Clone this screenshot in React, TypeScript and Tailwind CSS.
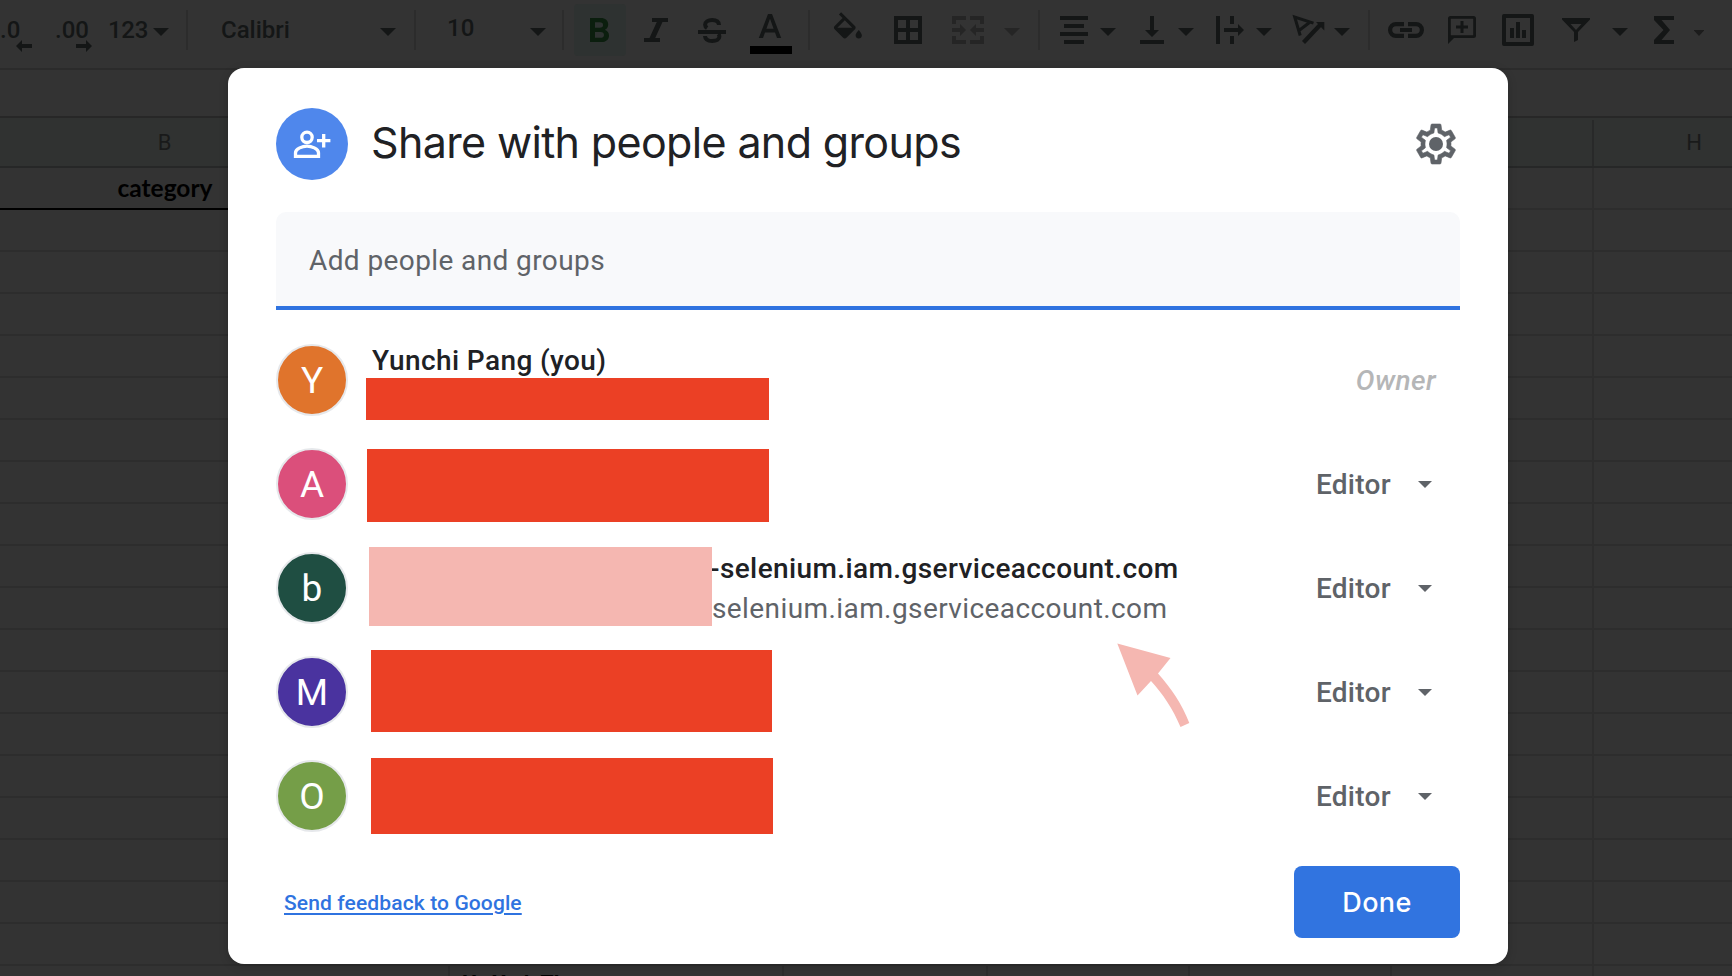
import React from "react";

type Person = {
  initial: string;
  avatar: string;
  role: "Owner" | "Editor";
  mask: string;
  name?: string;
  nameClass?: string;
  email?: string;
};

const people: Person[] = [
  {
    initial: "Y",
    avatar: "bg-[#e0742c]",
    role: "Owner",
    name: "Yunchi Pang (you)",
    nameClass: "tracking-[0.4px]",
    mask: "left-[90px] top-[50px] h-[42px] w-[403px] bg-[#eb4025]",
  },
  {
    initial: "A",
    avatar: "bg-[#db4f7b]",
    role: "Editor",
    mask: "left-[91px] top-[17px] h-[73px] w-[402px] bg-[#eb4025]",
  },
  {
    initial: "b",
    avatar: "bg-[#1f4e42]",
    role: "Editor",
    name: "-selenium.iam.gserviceaccount.com",
    nameClass: "pl-[338px] tracking-[0.4px]",
    email: "selenium.iam.gserviceaccount.com",
    mask: "left-[93px] top-[11px] h-[79px] w-[343px] bg-[#f5b7b1]",
  },
  {
    initial: "M",
    avatar: "bg-[#4a339f]",
    role: "Editor",
    mask: "left-[95px] top-[10px] h-[82px] w-[401px] bg-[#eb4025]",
  },
  {
    initial: "O",
    avatar: "bg-[#759e48]",
    role: "Editor",
    mask: "left-[95px] top-[14px] h-[76px] w-[402px] bg-[#eb4025]",
  },
];

function Glyph({
  x,
  w,
  className = "",
  children,
}: {
  x: number;
  w: number;
  className?: string;
  children: React.ReactNode;
}) {
  return (
    <svg
      width={w}
      height={56}
      viewBox={`${x} 0 ${w} 56`}
      fill="currentColor"
      className={`shrink-0 ${className}`}
    >
      {children}
    </svg>
  );
}

function Caret({ className }: { className: string }) {
  return (
    <svg width="16" height="56" viewBox="0 0 16 56" fill="currentColor" className={`shrink-0 ${className}`}>
      <path d="M0 28H16L8 36Z" />
    </svg>
  );
}

function Divider({ className }: { className: string }) {
  return <div className={`mt-[10px] h-[40px] w-[2px] shrink-0 bg-[#2c2c2c] ${className}`} />;
}

function Toolbar() {
  return (
    <div className="flex h-[70px] w-full items-start overflow-hidden border-b-2 border-[#2b2b2b] text-[24px] font-medium text-[#141616]">
      <div className="flex w-[32px] shrink-0">
        <span className="mt-[16px] w-[20px] leading-[28px]">.0</span>
        <svg width="16" height="56" viewBox="16 0 16 56" fill="currentColor" className="-ml-[4px] shrink-0">
          <path d="M16 46l6-6v4h10v4H22v4z" />
        </svg>
      </div>
      <span className="ml-[23px] mt-[16px] w-[33px] shrink-0 leading-[28px]">.00</span>
      <Glyph x={76} w={16} className="-ml-[12px]">
        <path d="M92 46l-6-6v4H76v4h10v4z" />
      </Glyph>
      <span className="ml-[16px] mt-[16px] w-[42px] shrink-0 leading-[28px] tracking-[-0.3px]">123</span>
      <Caret className="ml-[3px]" />
      <Divider className="ml-[17px]" />
      <span className="ml-[33px] mt-[16px] w-[80px] shrink-0 leading-[28px]">Calibri</span>
      <Caret className="ml-[79px]" />
      <Divider className="ml-[18px]" />
      <span className="ml-[31px] mt-[14px] w-[40px] shrink-0 leading-[28px]">10</span>
      <Caret className="ml-[43px]" />
      <Divider className="ml-[16px]" />
      <div className="ml-[10px] mt-[4px] h-[52px] w-[52px] shrink-0 rounded-[4px] bg-[#2e3231] text-[#0b1e0e]">
        <svg width="52" height="52" viewBox="574 4 52 52" fill="currentColor">
          <path
            fillRule="evenodd"
            d="M590 18h10.500c5 0 7.700 2.500 7.700 6.400 0 2.500-1.300 4.400-3.400 5.400 2.600.9 4.200 3 4.200 5.600 0 4.200-3 6.600-7.700 6.600H590zM595 22.200v5.600h4.700c2.200 0 3.400-1 3.400-2.800s-1.200-2.800-3.400-2.800zM595 32v5.800h5.600c2.200 0 3.400-1.100 3.400-2.900S602.800 32 600.600 32z"
          />
        </svg>
      </div>
      <Glyph x={644} w={24} className="ml-[18px]">
        <path d="M652 18h16v4h-5.500l-7.300 16H660v4h-16v-4h5.500l7.300-16H652z" />
      </Glyph>
      <Glyph x={698} w={28} className="ml-[30px]">
        <path d="M698 30h28v4h-28z" />
        <path
          d="M719 25c-.2-3.300-2.900-5-6.900-5-4.200 0-7 1.900-7 4.700 0 1.600.8 2.500 2 3.300M705 36c.2 3.300 2.900 5 7.200 5s7.200-1.700 7.200-4.500c0-1-.4-1.800-1-2.500"
          fill="none"
          stroke="currentColor"
          strokeWidth="4"
        />
      </Glyph>
      <Glyph x={750} w={42} className="ml-[24px]">
        <path d="M768 14h4l9.200 24h-4.200l-2-5.500h-10l-2 5.500h-4.200zM766.400 28.700h7.200L770 18.800z" fillRule="evenodd" />
        <path d="M750 46h42v8h-42z" fill="#000" />
      </Glyph>
      <Divider className="ml-[16px]" />
      <Glyph x={832} w={32} className="ml-[22px]">
        <path
          transform="translate(829.3 12.200) scale(1.550)"
          d="M16.560 8.940L7.620 0 6.210 1.410l2.380 2.380-5.150 5.150c-.59.59-.59 1.540 0 2.120l5.500 5.500c.29.29.68.44 1.060.44s.77-.15 1.060-.44l5.500-5.500c.59-.58.59-1.530 0-2.120zM5.210 10L10 5.210 14.790 10H5.210zM19 11.500s-2 2.170-2 3.500c0 1.100.9 2 2 2s2-.9 2-2c0-1.330-2-3.500-2-3.500z"
        />
      </Glyph>
      <Glyph x={894} w={28} className="ml-[30px]">
        <path fillRule="evenodd" d="M894 16h28v28h-28zM898 20v8h8v-8zM910 20v8h8v-8zM898 32v8h8v-8zM910 32v8h8v-8z" />
      </Glyph>
      <Glyph x={952} w={32} className="ml-[30px] text-[#252525]">
        <path d="M952 24v-8h14v4h-10v4zM984 24v-8h-14v4h10v4zM952 36v8h14v-4h-10v-4zM984 36v8h-14v-4h10v-4zM952 28h8v-4l6 6-6 6v-4h-8zM984 28h-8v-4l-6 6 6 6v-4h8z" />
      </Glyph>
      <Caret className="ml-[20px] text-[#252525]" />
      <Divider className="ml-[18px]" />
      <Glyph x={1060} w={28} className="ml-[20px]">
        <path d="M1060 16h28v4h-28zM1064 24h20v4h-20zM1060 32h28v4h-28zM1064 40h20v4h-20z" />
      </Glyph>
      <Caret className="ml-[12px]" />
      <Glyph x={1140} w={24} className="ml-[24px]">
        <path d="M1150 16h4v14h5l-7 7-7-7h5zM1140 40h24v4h-24z" />
      </Glyph>
      <Caret className="ml-[14px]" />
      <Glyph x={1216} w={28} className="ml-[22px]">
        <path d="M1216 16h4v28h-4zM1230 16h4v8h-4zM1230 36h4v8h-4zM1224 28h14v-4l6 6-6 6v-4h-14z" />
      </Glyph>
      <Caret className="ml-[12px]" />
      <Glyph x={1292} w={34} className="ml-[20px]">
        <path d="M1313.500 23.200L1294.700 17 1300.200 35.500M1309.500 22.500L1299 30.500" fill="none" stroke="currentColor" strokeWidth="3" />
        <path d="M1303.500 42.500L1320 25" fill="none" stroke="currentColor" strokeWidth="4.200" />
        <path d="M1316 22h8.300v8.500z" />
      </Glyph>
      <Caret className="ml-[8px]" />
      <Divider className="ml-[18px]" />
      <Glyph x={1388} w={36} className="ml-[18px]">
        <path
          d="M1404 24.100h-8a5.900 5.900 0 0 0 0 11.800h8M1408 24.100h8a5.900 5.900 0 0 1 0 11.800h-8"
          fill="none"
          stroke="currentColor"
          strokeWidth="4.200"
        />
        <path d="M1400 28h12v4h-12z" />
      </Glyph>
      <Glyph x={1448} w={28} className="ml-[24px]">
        <path
          fillRule="evenodd"
          d="M1450.500 16h23a2.500 2.500 0 0 1 2.500 2.500v17a2.500 2.500 0 0 1-2.500 2.500H1454l-6 6V18.500a2.500 2.500 0 0 1 2.500-2.500zM1450.800 18.800v16.400h22.400V18.800z"
        />
        <path d="M1460.500 21h3v4.500h4.500v3h-4.500v4.500h-3v-4.500h-4.500v-3h4.500z" />
      </Glyph>
      <Glyph x={1502} w={32} className="ml-[26px]">
        <path
          fillRule="evenodd"
          d="M1504 14h28a2 2 0 0 1 2 2v28a2 2 0 0 1-2 2h-28a2 2 0 0 1-2-2V16a2 2 0 0 1 2-2zM1506 18v24h24V18z"
        />
        <path d="M1510 28h4v10h-4zM1516 22h4v16h-4zM1522 30h4v8h-4z" />
      </Glyph>
      <Glyph x={1562} w={28} className="ml-[28px]">
        <path fillRule="evenodd" d="M1562 18h28v1.500L1578 32v8l-4 2V32l-12-12.500zM1570.500 24l5.500 6 5.500-6z" />
      </Glyph>
      <Caret className="ml-[22px]" />
      <Glyph x={1654} w={20} className="ml-[26px]">
        <path d="M1654 16h20v4h-12.500l8.500 10-8.500 10h12.500v4h-20v-4l9.500-10-9.500-10z" />
      </Glyph>
      <Glyph x={1694} w={10} className="ml-[20px] text-[#1c1c1c]">
        <path d="M1693.500 30h11l-5.500 6z" />
      </Glyph>
    </div>
  );
}

const columns = [
  { width: "w-[450px]", label: "B" },
  { width: "w-[334px]", label: "" },
  { width: "w-[204px]", label: "" },
  { width: "w-[202px]", label: "" },
  { width: "w-[202px]", label: "" },
  { width: "w-[202px]", label: "" },
  { width: "w-[202px]", label: "H" },
];

function Sheet() {
  return (
    <div className="w-[1796px]">
      <div className="h-[48px] border-b-2 border-[#272727]" />
      <div className="flex h-[50px] border-b-2 border-[#262727] bg-[#303231] pt-[2px]">
        {columns.map((column, i) => (
          <div
            key={i}
            className={`${column.width} flex shrink-0 items-center justify-center border-r-2 border-[#282929] text-[22px] text-[#191a1a] ${i === 0 ? "pr-[119px]" : ""}`}
          >
            <span className="-mt-px">{column.label}</span>
          </div>
        ))}
      </div>
      {Array.from({ length: 20 }, (_, r) => (
        <div key={r} className="flex h-[42px] overflow-hidden">
          {columns.map((column, c) => (
            <div
              key={c}
              className={`${column.width} shrink-0 overflow-hidden border-r-2 border-b-2 border-r-[#2d2d2d] ${
                r === 0 && c === 0 ? "border-b-black" : "border-b-[#2d2d2d]"
              }`}
            >
              {r === 0 && c === 0 && (
                <div className="w-[330px] text-center font-[Lato,sans-serif] text-[24.5px] leading-[40px] font-bold text-black">
                  category
                </div>
              )}
              {r === 19 && c === 1 && (
                <div className="pt-[2px] pl-[13px] text-[21px] leading-[30px] font-bold text-black">Yu Yuth TI</div>
              )}
            </div>
          ))}
        </div>
      ))}
    </div>
  );
}

function PersonRow({ person }: { person: Person }) {
  return (
    <li className="relative flex h-[104px] items-center">
      <div
        className={`flex h-[72px] w-[72px] shrink-0 items-center justify-center rounded-full border-2 border-[#e6e8eb] text-[37px] text-white ${person.avatar}`}
      >
        <span className="mt-px leading-none">{person.initial}</span>
      </div>
      <div className="ml-[24px] flex h-[80px] grow flex-col pt-px text-[28px] leading-[40px] whitespace-nowrap">
        {person.name && <span className={`font-medium text-[#202124] ${person.nameClass}`}>{person.name}</span>}
        {person.email && <span className="pl-[340px] tracking-[0.41px] text-[#5f6368]">{person.email}</span>}
      </div>
      {person.role === "Owner" ? (
        <span className="mt-[2px] mr-[24px] text-[28px] font-medium tracking-[0.4px] text-[#b5b6b7] italic">Owner</span>
      ) : (
        <div className="mr-[28px] flex items-center gap-[27px] text-[28px] font-medium text-[#5f6368]">
          <span className="mt-[2px] tracking-[0.3px]">Editor</span>
          <svg width="14" height="7" viewBox="0 0 14 7" fill="currentColor" className="mt-px">
            <path d="M0 0H14L7 7Z" />
          </svg>
        </div>
      )}
      <div className={`absolute ${person.mask}`} />
    </li>
  );
}

function ShareDialog() {
  return (
    <div className="absolute top-[68px] left-[228px] flex h-[896px] w-[1280px] flex-col rounded-[16px] bg-white px-[48px] pt-[40px] shadow-[0_2px_10px_rgba(0,0,0,0.2)]">
      <header className="flex h-[72px] items-center">
        <svg width="72" height="72" viewBox="276 108 72 72" className="shrink-0">
          <circle cx="312" cy="144" r="36" fill="#4f87ec" />
          <circle cx="307" cy="137.300" r="5.200" fill="none" stroke="#fff" strokeWidth="3.300" />
          <path d="M295.500 156.300v-3.500c0-4.200 7.200-6.700 11.500-6.700s11.500 2.500 11.500 6.700v3.500z" fill="none" stroke="#fff" strokeWidth="3.300" />
          <path d="M323.700 134v13.400M317 140.700h13.400" stroke="#fff" strokeWidth="3.300" />
        </svg>
        <h1 className="-mt-[4px] ml-[23px] grow font-[Inter,sans-serif] text-[43px] leading-[56px] font-normal tracking-[-0.65px] text-[#202124]">
          Share with people and groups
        </h1>
        <svg width="48" height="48" viewBox="0 0 24 24" fill="#5f6368" className="shrink-0">
          <path
            stroke="#5f6368"
            strokeWidth="0.300"
            d="M19.430 12.980c.04-.32.07-.64.07-.98 0-.34-.03-.66-.07-.98l2.110-1.650c.19-.15.24-.42.12-.64l-2-3.460a.5.5 0 0 0-.61-.22l-2.490 1c-.52-.4-1.080-.73-1.690-.98l-.38-2.650A.488.488 0 0 0 14 2h-4c-.25 0-.46.18-.49.42l-.38 2.650c-.61.25-1.170.59-1.690.98l-2.490-1a.566.566 0 0 0-.18-.03c-.17 0-.34.09-.43.25l-2 3.460c-.13.22-.07.49.12.64l2.110 1.650c-.04.32-.07.65-.07.98 0 .33.03.66.07.98l-2.110 1.650c-.19.15-.24.42-.12.64l2 3.460a.5.5 0 0 0 .61.22l2.490-1c.52.4 1.080.73 1.690.98l.38 2.650c.03.24.24.42.49.42h4c.25 0 .46-.18.49-.42l.38-2.650c.61-.25 1.170-.59 1.690-.98l2.490 1c.06.02.12.03.18.03.17 0 .34-.09.43-.25l2-3.460c.12-.22.07-.49-.12-.64l-2.110-1.650zm-1.980-1.710c.04.31.05.52.05.73 0 .21-.02.43-.05.73l-.14 1.130.89.7 1.080.84-.7 1.210-1.270-.51-1.040-.42-.9.68c-.43.32-.84.56-1.250.73l-1.060.43-.16 1.130-.2 1.350h-1.400l-.19-1.350-.16-1.130-1.060-.43c-.43-.18-.83-.41-1.230-.71l-.91-.7-1.060.43-1.270.51-.7-1.210 1.080-.84.89-.7-.14-1.130c-.03-.31-.05-.54-.05-.74s.02-.43.05-.73l.14-1.130-.89-.7-1.080-.84.7-1.210 1.270.51 1.040.42.9-.68c.43-.32.84-.56 1.250-.73l1.060-.43.16-1.130.2-1.350h1.390l.19 1.350.16 1.130 1.060.43c.43.18.83.41 1.230.71l.91.7 1.060-.43 1.270-.51.7 1.210-1.070.85-.89.7.14 1.130z"
          />
          <circle cx="12" cy="12" r="3.500" />
        </svg>
      </header>

      <div className="mt-[32px] flex h-[98px] shrink-0 items-center rounded-t-[10px] border-b-4 border-[#2f73e0] bg-[#f8f9fb] pl-[33px] text-[28px] tracking-[0.4px] text-[#5f6368]">
        <span className="mt-[3px]">Add people and groups</span>
      </div>

      <ul className="mt-[18px]">
        {people.map((p) => (
          <PersonRow key={p.initial} person={p} />
        ))}
      </ul>

      <footer className="mt-[18px] flex h-[72px] items-center justify-between pl-[8px]">
        <a className="mt-[3px] text-[21px] font-medium tracking-[0.12px] text-[#2f73e0] underline decoration-2 underline-offset-[3px]">
          Send feedback to Google
        </a>
        <button className="h-[72px] w-[166px] rounded-[8px] bg-[#3174e0] pt-[2px] font-[Inter,sans-serif] text-[27px] font-medium tracking-[0.4px] text-white">
          Done
        </button>
      </footer>

      <svg width="74" height="86" viewBox="1116 642 74 86" className="absolute top-[574px] left-[888px]">
        <path
          d="M1117.300 643.500L1170.500 658 1158 673.500C1171 688 1182 704 1189.300 723L1180.500 727C1173 709 1163 694 1151 681L1137.500 695.500Z"
          fill="#f5b7b1"
        />
      </svg>
    </div>
  );
}

export default function App() {
  return (
    <div className="relative h-[976px] w-[1732px] overflow-hidden bg-[#333333] font-[Roboto,sans-serif]">
      <Toolbar />
      <Sheet />
      <ShareDialog />
    </div>
  );
}
